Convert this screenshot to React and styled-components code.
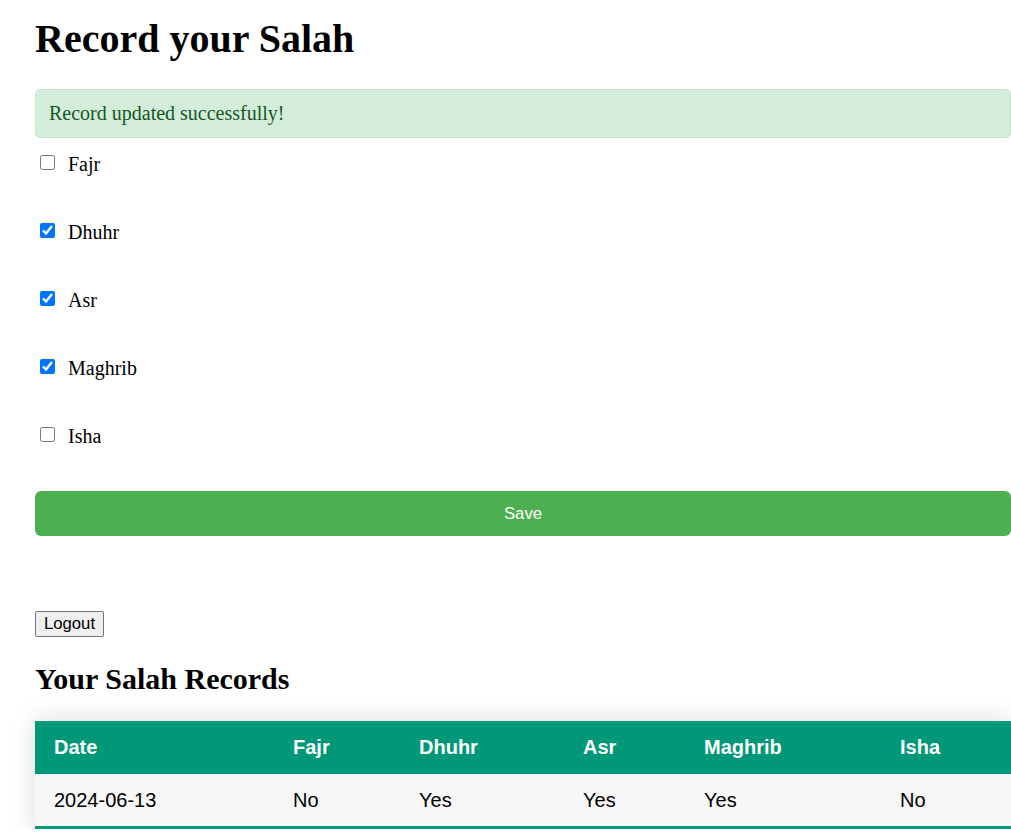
import React, { useState } from "react";
import styled, { createGlobalStyle } from "styled-components";

const Global = createGlobalStyle`
  html, body { margin: 0; padding: 0; background: #fff; overflow: hidden; }
  body { font-family: "Liberation Serif", "Times New Roman", serif; font-size: 20px; color: #000; }
`;

const Page = styled.div`
  width: 976px;
  padding: 16px 0 0 35px;
  display: flex;
  flex-direction: column;
`;

const Title = styled.h1`
  margin: 0 0 27px;
  font-size: 40px;
  font-weight: bold;
  line-height: 46px;
`;

const Alert = styled.div`
  border: 1px solid #c3e6cb;
  background: #d4edda;
  color: #155724;
  border-radius: 5px;
  padding: 12px 13px;
  line-height: 23px;
  margin-bottom: 15px;
`;

const PrayerList = styled.div`
  display: flex;
  flex-direction: column;
  gap: 45px;
`;

const PrayerRow = styled.label`
  display: flex;
  align-items: center;
  height: 23px;
  line-height: 23px;
`;

const Check = styled.input.attrs({ type: "checkbox" })`
  width: 15px;
  height: 15px;
  margin: 0 13px 5px 5px;
  accent-color: #0075ff;
`;

const SaveButton = styled.button`
  margin-top: 43px;
  height: 45px;
  border: none;
  border-radius: 6px;
  background: #4caf50;
  color: #fff;
  font-family: "Liberation Sans", Arial, sans-serif;
  font-size: 16.7px;
`;

const LogoutButton = styled.button`
  align-self: flex-start;
  margin-top: 75px;
  height: 26px;
  padding: 0 8px;
  background: #efefef;
  border: 1px solid #767676;
  border-radius: 2px;
  color: #000;
  font-family: "Liberation Sans", Arial, sans-serif;
  font-size: 16.7px;
`;

const SubTitle = styled.h2`
  margin: 24px 0 25px;
  font-size: 30px;
  font-weight: bold;
  line-height: 35px;
`;

const Table = styled.table`
  width: 976px;
  border-collapse: collapse;
  table-layout: fixed;
  font-family: "Liberation Sans", Arial, sans-serif;
  font-size: 20px;
  box-shadow: 0 0 25px rgba(0, 0, 0, 0.15);
`;

const HeadRow = styled.tr`
  background: #009879;
  color: #fff;
`;

const Th = styled.th`
  text-align: left;
  font-weight: bold;
  padding: 15px 19px;
  line-height: 23px;
`;

const BodyRow = styled.tr`
  background: #f7f7f7;
  border-bottom: 3px solid #009879;
`;

const Td = styled.td`
  padding: 15px 19px 14px;
  line-height: 23px;
`;

const prayers = ["Fajr", "Dhuhr", "Asr", "Maghrib", "Isha"];
const widths = [239, 126, 164, 121, 196, 130];

export default function App() {
  const [checked, setChecked] = useState({ Fajr: false, Dhuhr: true, Asr: true, Maghrib: true, Isha: false });
  const record = { date: "2024-06-13", Fajr: "No", Dhuhr: "Yes", Asr: "Yes", Maghrib: "Yes", Isha: "No" };
  return (
    <>
      <Global />
      <Page>
        <Title>Record your Salah</Title>
        <Alert>Record updated successfully!</Alert>
        <PrayerList>
          {prayers.map((p) => (
            <PrayerRow key={p}>
              <Check checked={checked[p]} onChange={() => setChecked({ ...checked, [p]: !checked[p] })} />
              {p}
            </PrayerRow>
          ))}
        </PrayerList>
        <SaveButton>Save</SaveButton>
        <LogoutButton>Logout</LogoutButton>
        <SubTitle>Your Salah Records</SubTitle>
        <Table>
          <colgroup>
            {widths.map((w, i) => (
              <col key={i} style={{ width: w }} />
            ))}
          </colgroup>
          <thead>
            <HeadRow>
              <Th>Date</Th>
              {prayers.map((p) => (
                <Th key={p}>{p}</Th>
              ))}
            </HeadRow>
          </thead>
          <tbody>
            <BodyRow>
              <Td>{record.date}</Td>
              {prayers.map((p) => (
                <Td key={p}>{record[p]}</Td>
              ))}
            </BodyRow>
          </tbody>
        </Table>
      </Page>
    </>
  );
}
